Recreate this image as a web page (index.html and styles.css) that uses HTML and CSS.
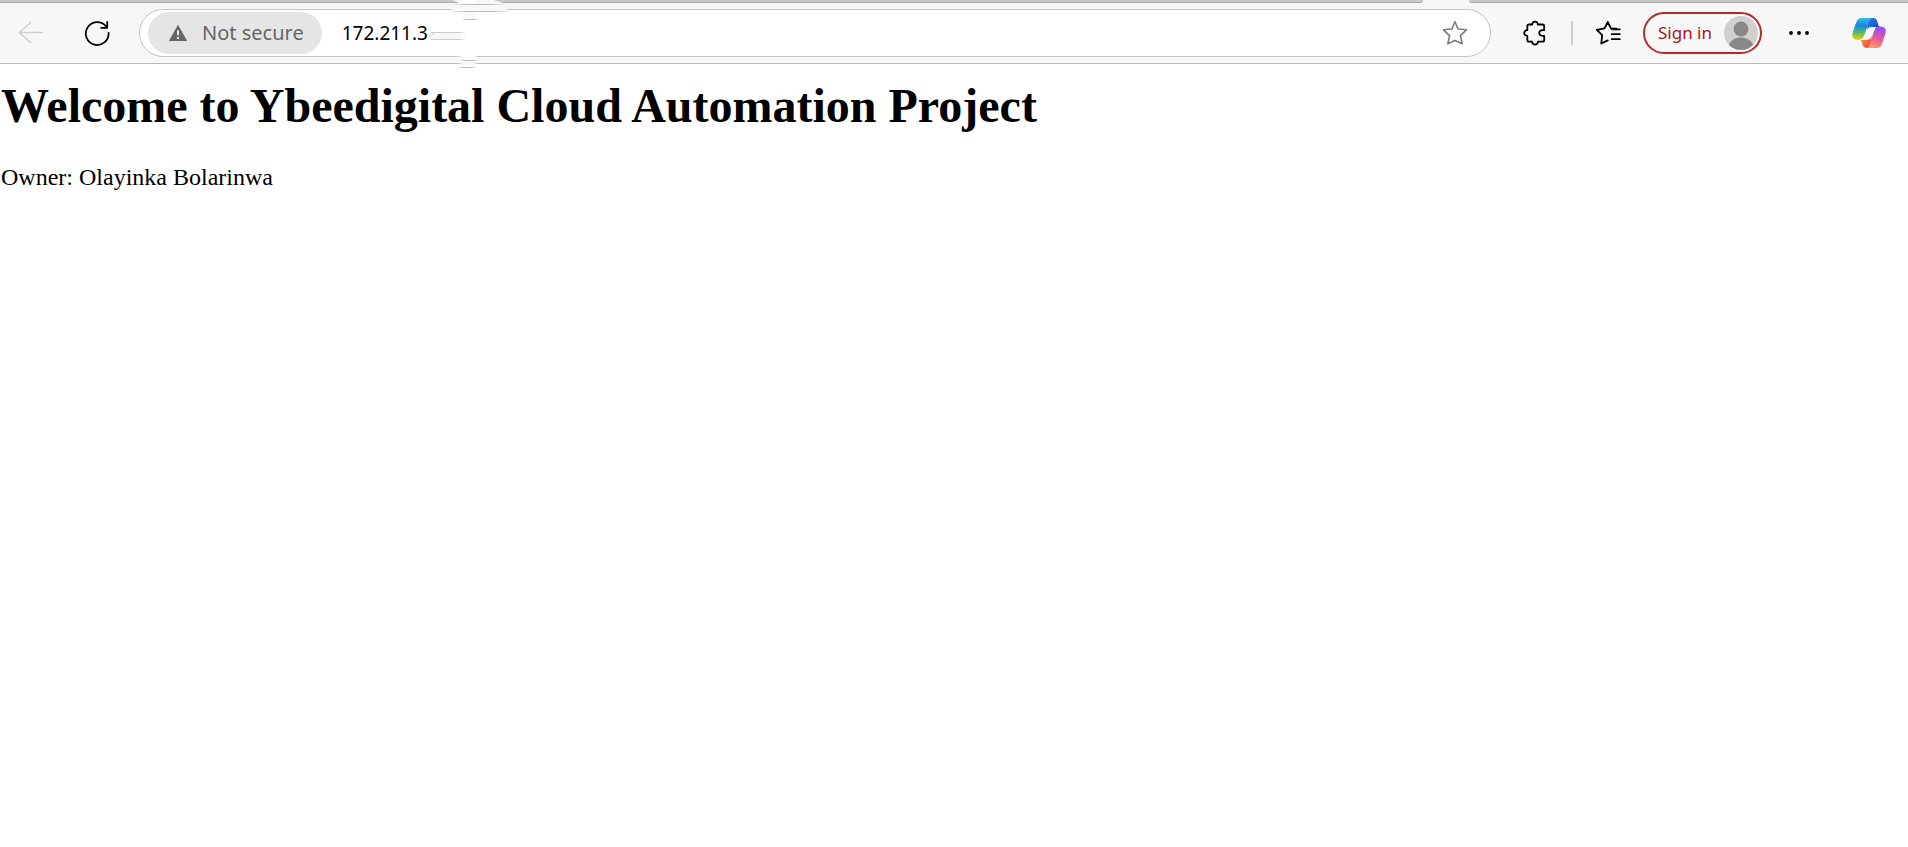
FILE: index.html
```html
<!DOCTYPE html>
<html lang="en">
<head>
<meta charset="utf-8">
<title>Ybeedigital Cloud Automation Project</title>
<link rel="stylesheet" href="styles.css">
</head>
<body>
<header class="browser">
  <div class="tabstrip">
    <div class="strip strip-left"></div>
    <div class="strip strip-right"></div>
  </div>
  <div class="toolbar">
    <button class="icon-button back" type="button" aria-label="Back" disabled>
      <svg width="26" height="26" viewBox="0 0 26 26" fill="none" stroke="#cfcfcf" stroke-width="1.6" stroke-linecap="round" stroke-linejoin="round"><path d="M24.5 12.5H1.5M12.5 2.5L1.5 12.5L12.5 22.5"/></svg>
    </button>
    <button class="icon-button reload" type="button" aria-label="Refresh">
      <svg width="26" height="26" viewBox="0 0 26 26" fill="none" stroke="#000" stroke-width="1.8" stroke-linecap="round" stroke-linejoin="round"><path d="M24.6 13A11.4 11.4 0 1 1 21.9 6.2L22.8 7.4M23.2 1.8V7.8H17.2"/></svg>
    </button>
    <div class="address">
      <button class="security" type="button">
        <svg width="20" height="18" viewBox="0 0 20 18"><path d="M10 .8L19.2 17H.8Z" fill="#666"/><path d="M10 6.2V11.3M10 13V15" stroke="#e5e5e5" stroke-width="2"/></svg>
        <span>Not secure</span>
      </button>
      <input class="url" type="text" aria-label="Address" value="172.211.3">
      <button class="icon-button" type="button" aria-label="Add to favorites">
        <svg width="26" height="26" viewBox="0 0 26 26" fill="none" stroke="#7a7a7a" stroke-width="1.6" stroke-linejoin="round"><path d="M13 1.8L16.1 9L24.5 9.8L18.4 15.7L20.2 23.8L13 20.5L5.8 23.8L7.6 15.7L1.5 9.8L9.9 9Z"/></svg>
      </button>
    </div>
    <button class="icon-button extensions" type="button" aria-label="Extensions">
      <svg width="24" height="26" viewBox="0 0 24 26" fill="none" stroke="#000" stroke-width="1.8" stroke-linejoin="round"><path d="M6 4.5H9.2C9 0.6 15 0.6 14.8 4.5H19.5Q21.2 4.5 21.2 6.2V10.2C14.5 9 14.5 17 21.2 15.8V20Q21.2 21.7 19.5 21.7H14.8C15 25.6 9 25.6 9.2 21.7H6Q4.3 21.7 4.3 20V15.8C.2 16 .2 10 4.3 10.2V6.2Q4.3 4.5 6 4.5Z"/></svg>
    </button>
    <span class="divider"></span>
    <button class="icon-button favorites" type="button" aria-label="Favorites">
      <svg width="26" height="26" viewBox="0 0 26 26" fill="none" stroke="#000" stroke-width="1.8" stroke-linecap="round" stroke-linejoin="round"><path d="M21.5 8.7L15.9 8.4L12.8 2L9.5 8.4L1.8 9.9L7.2 15.2L6.3 23.5L12.8 20.4M16.8 9.3H24.8M16.8 14.2H24.8M16.8 19.2H24.8"/></svg>
    </button>
    <button class="signin" type="button">
      <span>Sign in</span>
      <svg width="34" height="34" viewBox="0 0 34 34"><circle cx="17" cy="17" r="17" fill="#d2d0ce"/><circle cx="17" cy="13" r="7.4" fill="#8a8886"/><path d="M5 29C8 19 26 19 29 29A17 17 0 0 1 5 29Z" fill="#8a8886"/></svg>
    </button>
    <button class="icon-button more" type="button" aria-label="Settings and more">
      <svg width="22" height="6" viewBox="0 0 22 6"><circle cx="3" cy="3" r="1.9"/><circle cx="11" cy="3" r="1.9"/><circle cx="19" cy="3" r="1.9"/></svg>
    </button>
    <button class="icon-button copilot" type="button" aria-label="Copilot">
      <svg width="34" height="32" viewBox="0 0 34 32">
        <defs>
          <linearGradient id="cool" x1="0" y1="0" x2="0" y2="1"><stop offset="0" stop-color="#35bdf4"/><stop offset=".35" stop-color="#1688dc"/><stop offset=".66" stop-color="#55b96c"/><stop offset="1" stop-color="#ffce05"/></linearGradient>
          <linearGradient id="warm" x1=".3" y1="0" x2="0" y2="1"><stop offset="0" stop-color="#9c50ed"/><stop offset=".45" stop-color="#ed5794"/><stop offset="1" stop-color="#ffad60"/></linearGradient>
          <linearGradient id="blue" x1="0" y1="0" x2="1" y2="1"><stop offset="0" stop-color="#2589ec"/><stop offset="1" stop-color="#1636bc"/></linearGradient>
          <linearGradient id="fire" x1="0" y1="0" x2="1" y2="1"><stop offset="0" stop-color="#ffb53a"/><stop offset=".6" stop-color="#f26139"/><stop offset="1" stop-color="#ed4b70"/></linearGradient>
        </defs>
        <path d="M16 1H21C24 1 25 3 26 7Q26.6 9.5 28 10H20Q17.5 10 15 14Z" fill="url(#blue)"/>
        <path d="M8 23Q9.5 23 10 26Q11 31 15 31H18L20 18Q17 22.6 13 23Z" fill="url(#fire)"/>
        <path d="M9 1H21C18 1 17.3 4 16.3 7L12 19Q10.5 23 6 23C1 23 -.5 20 .8 15L4 6Q5.5 1 9 1Z" fill="url(#cool)"/>
        <path d="M25 9.5H29Q35 10 33.5 16L30 27Q28.5 31 25 31H14C17 31 17.5 28 18.5 25L22.4 13Q23.4 9.5 26 9.5Z" fill="url(#warm)"/>
        <path d="M19 10H24Q22.6 10.5 22 13L19.6 19Q18.5 22.4 15 22.8H10Q11.6 22 12.4 19.5L15 13Q16 10 19 10Z" fill="#f7f7f7"/>
      </svg>
    </button>
  </div>
  <svg class="smudge" width="140" height="72" viewBox="0 0 140 72" aria-hidden="true">
    <defs>
      <linearGradient id="fade"><stop offset="0" stop-color="#bbb" stop-opacity="0"/><stop offset=".3" stop-color="#bbb"/><stop offset=".7" stop-color="#bbb"/><stop offset="1" stop-color="#bbb" stop-opacity="0"/></linearGradient>
      <linearGradient id="pale"><stop offset="0" stop-color="#f7f7f7" stop-opacity="0"/><stop offset=".3" stop-color="#f7f7f7"/><stop offset=".7" stop-color="#f7f7f7"/><stop offset="1" stop-color="#f7f7f7" stop-opacity="0"/></linearGradient>
      <linearGradient id="clear"><stop offset="0" stop-color="#fff" stop-opacity="0"/><stop offset=".3" stop-color="#fff"/><stop offset=".7" stop-color="#fff"/><stop offset="1" stop-color="#fff" stop-opacity="0"/></linearGradient>
    </defs>
    <path d="M30 0H70L80 3H36Z" fill="#f7f7f7"/>
    <rect x="38" width="16" height="3" fill="url(#clear)"/>
    <rect x="28" y="4" width="56" height="1" fill="url(#fade)"/>
    <rect x="28" y="8" width="56" height="3" fill="#f7f7f7"/>
    <rect x="26" y="11" width="62" height="1" fill="url(#fade)"/>
    <rect x="36" y="12" width="20" height="7" fill="url(#pale)"/>
    <rect x="38" y="19" width="18" height="1" fill="url(#fade)"/>
    <rect x="8" y="32" width="40" height="8" fill="#f7f7f7"/>
    <path d="M8 32.5H44M8 39.5H44" stroke="#ccc"/>
    <rect x="36" y="31" width="24" height="10" fill="url(#clear)"/>
    <path d="M6 37L11 33" stroke="#ccc"/>
    <rect x="34" y="55" width="22" height="4" fill="url(#clear)"/>
    <rect x="36" y="60" width="20" height="1" fill="url(#fade)"/>
    <rect x="34" y="61" width="22" height="4" fill="url(#pale)"/>
    <rect x="34" y="67" width="20" height="1" fill="url(#fade)"/>
  </svg>
</header>
<main class="page">
  <h1>Welcome to Ybeedigital Cloud Automation Project</h1>
  <p>Owner: Olayinka Bolarinwa</p>
</main>
</body>
</html>
```
FILE: styles.css
```css
* {
  box-sizing: border-box;
}

body {
  margin: 0;
  background: #fff;
  color: #000;
  font-family: "Liberation Serif", "Times New Roman", serif;
}

.browser {
  position: relative;
  background: #f7f7f7;
  border-bottom: 1px solid #bbb;
  font-family: "Noto Sans", "Segoe UI", sans-serif;
}

.tabstrip {
  display: flex;
  gap: 46px;
}

.strip {
  height: 3px;
  background: #c8c8c8;
  border-bottom: 1px solid #aaa;
}

.strip-left {
  flex: 1;
  border-bottom-right-radius: 3px;
}

.strip-right {
  width: 23%;
  border-bottom-left-radius: 3px;
}

.toolbar {
  display: flex;
  align-items: center;
  height: 60px;
  padding: 0 22px 0 18px;
}

button {
  padding: 0;
  border: 0;
  background: none;
  font: inherit;
}

.icon-button {
  display: flex;
  flex: none;
}

.reload {
  margin: 0 29px 0 40px;
}

.address {
  display: flex;
  flex: 1;
  align-items: center;
  height: 48px;
  padding: 0 22px 0 8px;
  border: 1px solid #c4c4c4;
  border-radius: 24px;
  background: #fff;
}

.security {
  display: flex;
  flex: none;
  align-items: center;
  gap: 14px;
  height: 42px;
  padding: 0 18px 0 20px;
  border-radius: 21px;
  background: #e5e5e5;
  color: #666;
  font-size: 20px;
  line-height: 28px;
}

.url {
  flex: 1;
  min-width: 0;
  padding: 0 20px;
  border: 0;
  outline: 0;
  background: none;
  color: #000;
  font-family: inherit;
  font-size: 19px;
  line-height: 28px;
}

.extensions {
  margin: 0 24px 0 32px;
}

.divider {
  width: 2px;
  height: 24px;
  background: #ccc;
}

.favorites {
  margin: 0 22px;
}

.signin {
  display: flex;
  flex: none;
  align-items: center;
  gap: 12px;
  height: 42px;
  padding: 0 2px 0 13px;
  border: 2px solid #b42a2e;
  border-radius: 21px;
  color: #a4161a;
  font-size: 17px;
  line-height: 24px;
}

.more {
  margin: 0 42px 0 26px;
}

.smudge {
  position: absolute;
  top: 0;
  left: 423px;
}

.page {
  padding: 15px 1px;
}

.page h1 {
  margin: 0;
  font-size: 48px;
  line-height: 54px;
}

.page p {
  margin: 30px 0 0;
  font-size: 24px;
  line-height: 28px;
}
```
